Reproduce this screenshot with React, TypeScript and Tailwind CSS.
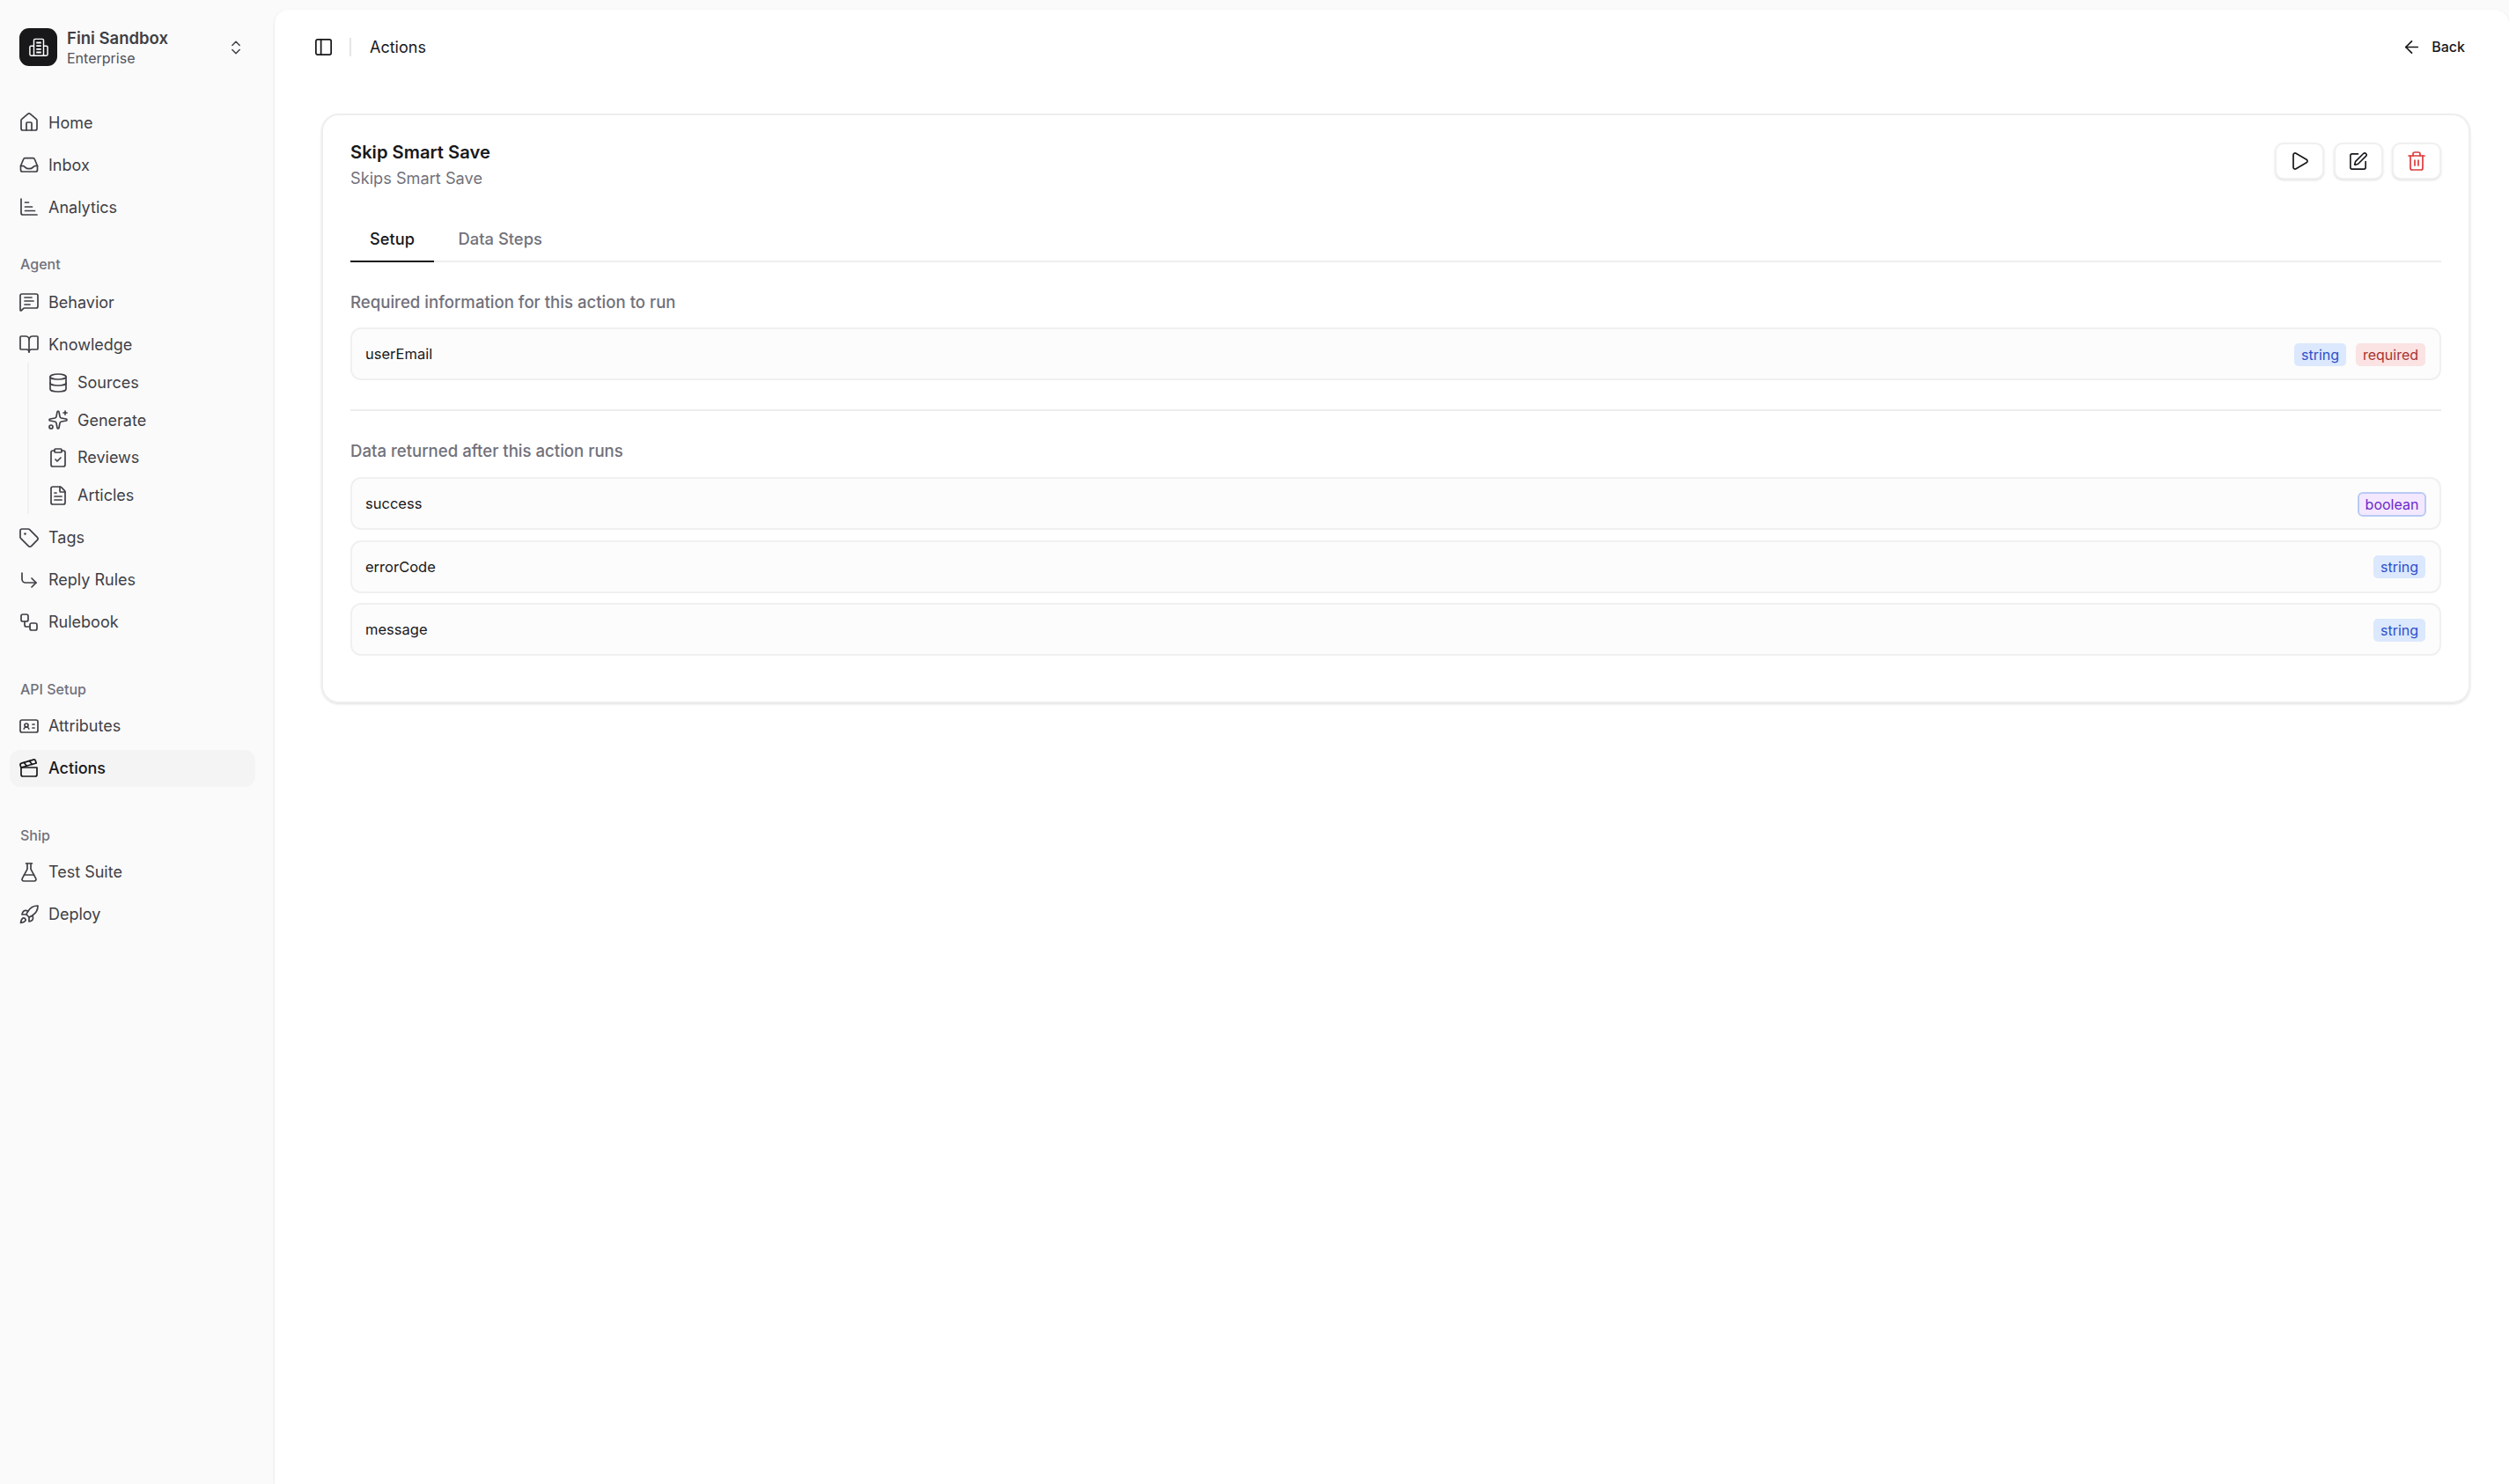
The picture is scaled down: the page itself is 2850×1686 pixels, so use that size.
import {
  ArrowLeft,
  BookOpen,
  ChevronsUpDown,
  Clapperboard,
  ClipboardCheck,
  CornerDownRight,
  Database,
  FileText,
  FlaskConical,
  House,
  IdCard,
  MessageSquareText,
  PanelLeft,
  Play,
  Rocket,
  Sparkles,
  SquarePen,
  Tag,
  Trash2,
  Workflow,
} from 'lucide-react';
import type { ComponentType, ReactNode } from 'react';

type IconProps = { className?: string; strokeWidth?: number };
type IconType = ComponentType<IconProps>;

const InboxTray = ({ className, strokeWidth }: IconProps) => (
  <svg viewBox="0 0 24 24" fill="none" stroke="currentColor" strokeWidth={strokeWidth} strokeLinecap="round" strokeLinejoin="round" className={className}>
    <path d="M2.5 13.5 5.6 6a2 2 0 0 1 1.9-1.3h9a2 2 0 0 1 1.9 1.3l3.1 7.5V18a2 2 0 0 1-2 2h-15a2 2 0 0 1-2-2z" />
    <path d="M2.5 13.5c2.2-.4 4 .2 5.2 1.6 1 1.2 2.6 1.6 4.3 1.6s3.300-.4 4.300-1.600c1.200-1.400 3-2 5.200-1.600" />
  </svg>
);

const BarsIcon = ({ className, strokeWidth }: IconProps) => (
  <svg viewBox="0 0 24 24" fill="none" stroke="currentColor" strokeWidth={strokeWidth} strokeLinecap="round" strokeLinejoin="round" className={className}>
    <path d="M3 3v16a2 2 0 0 0 2 2h16" />
    <path d="M7.500 7h4" />
    <path d="M7.500 12h8" />
    <path d="M7.500 16.500h11" />
  </svg>
);

const LogoIcon = () => (
  <svg viewBox="0 0 24 24" fill="none" stroke="currentColor" strokeWidth={1.6} strokeLinejoin="round" className="size-[22px]">
    <path d="M6 22V3a1.500 1.500 0 0 1 1.500-1.500h9A1.500 1.500 0 0 1 18 3v19" />
    <path d="M6 10H2.500A1.500 1.500 0 0 0 1 11.500V20.500A1.500 1.500 0 0 0 2.500 22h19a1.500 1.500 0 0 0 1.500-1.500V11.500A1.500 1.500 0 0 0 21.500 10H18" />
    <path d="M9 6h6M9 10h6M9 14h6M9 18h6" strokeWidth={2} />
  </svg>
);

const NavItem = ({ icon: Icon, label, active }: { icon: IconType; label: string; active?: boolean }) => (
  <div
    className={`flex h-[42px] items-center gap-[10px] rounded-[12px] pl-[10px] text-[18px] ${
      active ? 'bg-[#f4f4f5] font-medium text-[#18181b]' : 'text-[#3f3f46]'
    }`}
  >
    <Icon className="size-[24px] shrink-0" strokeWidth={1.7} />
    <span>{label}</span>
  </div>
);

const SubItem = ({ icon: Icon, label }: { icon: IconType; label: string }) => (
  <div className="flex h-[42.6px] items-center gap-[10px] text-[18px] text-[#3f3f46]">
    <Icon className="size-[24px] shrink-0" strokeWidth={1.7} />
    <span>{label}</span>
  </div>
);

const GroupLabel = ({ children, className }: { children: ReactNode; className: string }) => (
  <div className={`flex h-[24px] items-center pl-[12px] text-[16px] font-medium text-[#71717a] ${className}`}>{children}</div>
);

const Badge = ({ kind }: { kind: 'string' | 'required' | 'boolean' }) => {
  if (kind === 'string') {
    return (
      <span className="flex h-[26px] w-[59px] items-center justify-center rounded-[5px] bg-[#dbe8fd] text-[16px] text-[#2f4fc9]">
        string
      </span>
    );
  }
  if (kind === 'required') {
    return (
      <span className="flex h-[26px] w-[79px] items-center justify-center rounded-[5px] bg-[#fbe3e3] text-[16px] text-[#a83232]">
        required
      </span>
    );
  }
  return (
    <span className="-mr-px flex h-[28px] w-[78px] items-center justify-center rounded-[6px] border-2 border-[#b9caf5] bg-[#f3e8ff] text-[16px] text-[#6d28c9]">
      boolean
    </span>
  );
};

const FieldRow = ({ name, children }: { name: string; children: ReactNode }) => (
  <div className="flex h-[60px] items-center justify-between rounded-[12px] border-2 border-[#f0f0f0] bg-[#fcfcfc] pl-[15px] pr-[16px] pt-[1px] text-[16.5px] text-[#18181b]">
    <span>{name}</span>
    <div className="flex items-center gap-[11px]">{children}</div>
  </div>
);

const ActionButton = ({ children }: { children: ReactNode }) => (
  <button className="flex h-[42px] w-[56px] items-center justify-center rounded-[10px] border-2 border-[#f0f0f0] bg-white shadow-sm">
    {children}
  </button>
);

export default function App() {
  return (
    <div className="flex h-[1686px] w-[2850px] overflow-hidden bg-[#fafafa] font-['Inter',sans-serif]">
      <aside className="w-[312px] shrink-0">
        <div className="mt-[32px] flex h-[43px] items-center pl-[22px] pr-[34px]">
          <div className="flex size-[43px] items-center justify-center rounded-[11px] bg-[#18181b] text-white">
            <LogoIcon />
          </div>
          <div className="ml-[11px] flex-1">
            <div className="text-[18.5px] font-semibold leading-[24px] text-[#3f3f46]">Fini Sandbox</div>
            <div className="text-[16px] leading-[22px] text-[#52525b]">Enterprise</div>
          </div>
          <ChevronsUpDown className="size-[20px] text-[#3f3f46]" strokeWidth={1.8} />
        </div>

        <nav className="ml-[11px] mt-[43px] w-[279px]">
          <div className="flex flex-col gap-[6px]">
            <NavItem icon={House} label="Home" />
            <NavItem icon={InboxTray} label="Inbox" />
            <NavItem icon={BarsIcon} label="Analytics" />
          </div>

          <GroupLabel className="mb-[10px] mt-[32px]">Agent</GroupLabel>
          <div className="flex flex-col gap-[6px]">
            <NavItem icon={MessageSquareText} label="Behavior" />
            <div>
              <NavItem icon={BookOpen} label="Knowledge" />
              <div className="ml-[20px] border-l-2 border-[#f0f0f0] pl-[21px] pt-[1.5px]">
                <SubItem icon={Database} label="Sources" />
                <SubItem icon={Sparkles} label="Generate" />
                <SubItem icon={ClipboardCheck} label="Reviews" />
                <SubItem icon={FileText} label="Articles" />
              </div>
            </div>
            <NavItem icon={Tag} label="Tags" />
            <NavItem icon={CornerDownRight} label="Reply Rules" />
            <NavItem icon={Workflow} label="Rulebook" />
          </div>

          <GroupLabel className="mb-[9px] mt-[43px]">API Setup</GroupLabel>
          <div className="flex flex-col gap-[6px]">
            <NavItem icon={IdCard} label="Attributes" />
            <NavItem icon={Clapperboard} label="Actions" active />
          </div>

          <GroupLabel className="mb-[9px] mt-[43px]">Ship</GroupLabel>
          <div className="flex flex-col gap-[6px]">
            <NavItem icon={FlaskConical} label="Test Suite" />
            <NavItem icon={Rocket} label="Deploy" />
          </div>
        </nav>
      </aside>
      <main className="mt-[11px] flex flex-1 flex-col rounded-t-[16px] bg-white shadow-sm">
        <header className="flex h-[84px] items-center justify-between pl-[44px] pr-[50px]">
          <div className="flex items-center">
            <PanelLeft className="size-[23px] text-[#18181b]" strokeWidth={1.8} />
            <div className="ml-[18px] h-[21px] w-[2px] bg-[#e5e5e5]" />
            <span className="ml-[21px] text-[18px] text-[#18181b]">Actions</span>
          </div>
          <div className="flex items-center gap-[11px] text-[16px] font-medium text-[#18181b]">
            <ArrowLeft className="size-[23px]" strokeWidth={1.8} />
            <span>Back</span>
          </div>
        </header>
        <section className="ml-[53px] mr-[44px] mt-[34px] rounded-[20px] border-2 border-[#eeeeee] px-[31px] pb-[52px] pt-[28px] shadow-sm">
          <div className="flex items-start justify-between">
            <div>
              <h1 className="pt-[1px] text-[20.2px] font-semibold leading-[25px] text-[#18181b]">Skip Smart Save</h1>
              <p className="mt-[5px] text-[18.2px] leading-[24px] text-[#71717a]">Skips Smart Save</p>
            </div>
            <div className="mt-[3px] flex gap-[10.5px]">
              <ActionButton>
                <Play className="size-[24px] text-[#18181b]" strokeWidth={1.7} />
              </ActionButton>
              <ActionButton>
                <SquarePen className="size-[23px] text-[#18181b]" strokeWidth={1.7} />
              </ActionButton>
              <ActionButton>
                <Trash2 className="size-[24px] text-[#dc3b3b]" strokeWidth={1.7} />
              </ActionButton>
            </div>
          </div>
          <div className="mt-[34px] flex border-b-2 border-[#eeeeee]">
            <div className="-mb-[2px] flex h-[50px] w-[95px] items-center justify-center border-b-2 border-[#18181b] text-[18.2px] font-medium text-[#18181b]">
              Setup
            </div>
            <div className="ml-[27.5px] flex h-[48px] items-center text-[18.4px] font-medium text-[#71717a]">Data Steps</div>
          </div>
          <h2 className="mt-[33px] text-[18.6px] font-medium leading-[24px] text-[#71717a]">
            Required information for this action to run
          </h2>
          <div className="mt-[17px]">
            <FieldRow name="userEmail">
              <Badge kind="string" />
              <Badge kind="required" />
            </FieldRow>
          </div>
          <div className="mt-[33px] h-[2px] bg-[#eeeeee]" />
          <h2 className="mt-[33px] text-[18.6px] font-medium leading-[24px] text-[#71717a]">
            Data returned after this action runs
          </h2>
          <div className="mt-[18px] flex flex-col gap-[11.5px]">
            <FieldRow name="success">
              <Badge kind="boolean" />
            </FieldRow>
            <FieldRow name="errorCode">
              <Badge kind="string" />
            </FieldRow>
            <FieldRow name="message">
              <Badge kind="string" />
            </FieldRow>
          </div>
        </section>
      </main>
    </div>
  );
}
